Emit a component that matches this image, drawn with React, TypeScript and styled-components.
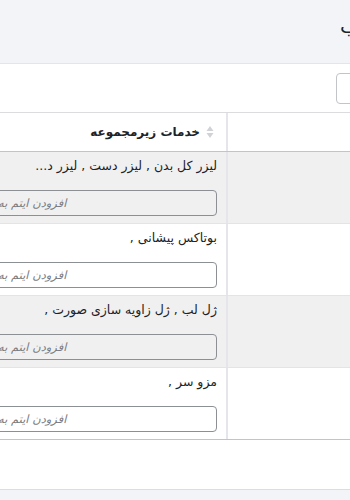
import React from "react";
import styled, { createGlobalStyle } from "styled-components";

const GlobalStyle = createGlobalStyle`
  html, body {
    margin: 0;
    padding: 0;
    background: #f3f4f7;
  }
  body {
    font-family: "DejaVu Sans", "Noto Sans", sans-serif;
    color: #1d2327;
  }
`;

// the shot is a crop of a wider rtl page, so the page is wider than the window
const Frame = styled.div`
  width: 350px;
  height: 500px;
  overflow: hidden;
  background: #f3f4f7;
`;

const Page = styled.div`
  direction: rtl;
  width: 600px;
  margin-left: -150px;
`;

const TopBar = styled.div`
  height: 64px;
  box-sizing: border-box;
  padding-top: 12px;
  border-bottom: 1px solid #e3e5ea;
  display: flex;
  align-items: flex-start;
`;

const TitleSlot = styled.div`
  width: 110px;
  text-align: left;
  padding-left: 1px;
`;

const Title = styled.h1`
  margin: 0;
  font-size: 20px;
  font-weight: 400;
  line-height: 28px;
  color: #1d2327;
  white-space: nowrap;
`;

const Panel = styled.div`
  background: #fff;
  padding-bottom: 49px;
  border-bottom: 1px solid #dcdde1;
`;

const Toolbar = styled.div`
  display: flex;
  padding: 9px 12px 8px;
`;

const Select = styled.div`
  width: 100px;
  height: 29px;
  border: 1px solid #c3c4c7;
  border-radius: 4px;
  background: #fff;
`;

const Table = styled.div`
  border-top: 1px solid #dcdcde;
  border-bottom: 1px solid #c3c4c7;
`;

const Row = styled.div<{ $striped?: boolean; $head?: boolean }>`
  display: grid;
  grid-template-columns: 224px 1fr;
  background: ${({ $striped }) => ($striped ? "#f0f0f1" : "#fff")};
  border-bottom: 1px solid ${({ $head }) => ($head ? "#c3c4c7" : "#e2e4e8")};
  &:last-child {
    border-bottom: none;
  }
`;

const SideCell = styled.div`
  border-left: 2px solid #e4e6eb;
`;

const HeadCell = styled.div`
  height: 38px;
  display: flex;
  align-items: center;
  gap: 6px;
  padding-right: 12px;
  font-size: 12px;
  font-weight: 700;
  color: #1d2327;
`;

const SortIcon = styled.svg`
  width: 8px;
  height: 14px;
  flex-shrink: 0;
`;

const BodyCell = styled.div`
  height: 71px;
  padding: 4px 9px 0;
  box-sizing: border-box;
  display: flex;
  flex-direction: column;
`;

const Services = styled.div`
  height: 20px;
  line-height: 20px;
  font-size: 12.5px;
  color: #1d2327;
  white-space: nowrap;
  margin-bottom: 14px;
`;

const ItemInput = styled.input`
  height: 26px;
  box-sizing: border-box;
  border: 1px solid #8c8f94;
  border-radius: 4px;
  background: transparent;
  padding: 0 8px 0 87px;
  text-align: left;
  font-family: "DejaVu Sans", sans-serif;
  font-size: 11.5px;
  font-style: italic;
  outline: none;
  &::placeholder {
    color: #787c82;
  }
`;

const rows = [
  "لیزر کل بدن , لیزر دست , لیزر د...",
  "بوتاکس پیشانی ,",
  "ژل لب , ژل زاویه سازی صورت ,",
  "مزو سر ,",
];

export default function App() {
  return (
    <>
      <GlobalStyle />
      <Frame>
        <Page>
          <TopBar>
            <TitleSlot>
              <Title>ترکیب</Title>
            </TitleSlot>
          </TopBar>
          <Panel>
            <Toolbar>
              <Select />
            </Toolbar>
            <Table>
              <Row $head>
                <SideCell />
                <HeadCell>
                  <SortIcon viewBox="0 0 8 14">
                    <path d="M4 1 L7.5 6 H0.5 Z" fill="#d0d2d6" />
                    <path d="M4 13 L7.5 8 H0.5 Z" fill="#d0d2d6" />
                  </SortIcon>
                  خدمات زیرمجموعه
                </HeadCell>
              </Row>
              {rows.map((text, i) => (
                <Row key={i} $striped={i % 2 === 0}>
                  <SideCell />
                  <BodyCell>
                    <Services>{text}</Services>
                    <ItemInput placeholder="افزودن ایتم به این لیست" />
                  </BodyCell>
                </Row>
              ))}
            </Table>
          </Panel>
        </Page>
      </Frame>
    </>
  );
}
